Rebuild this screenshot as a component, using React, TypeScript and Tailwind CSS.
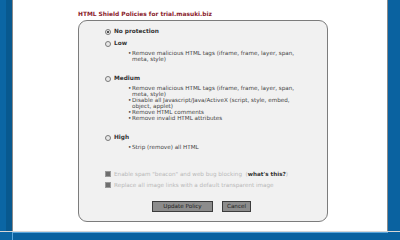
import React from 'react';

const font = { fontFamily: '"DejaVu Sans", Verdana, sans-serif' };

function Radio({ checked }: { checked?: boolean }) {
  return (
    <span className="relative inline-block w-[6px] h-[6px] rounded-full border border-[#7a7a7a] bg-[#e8e8e8] shrink-0">
      {checked ? <span className="absolute left-[1px] top-[1px] w-[2px] h-[2px] rounded-full bg-[#222]" /> : null}
    </span>
  );
}

function Option({ label, checked, items }: { label: string; checked?: boolean; items?: string[][] }) {
  return (
    <div>
      <div className="flex items-center gap-[3px] h-[7px]">
        <Radio checked={checked} />
        <span className="font-bold text-[#333] text-[5.8px] leading-[7px]">{label}</span>
      </div>
      {items ? (
        <ul className="mt-[3px] pl-[23px]">
          {items.map((lines, i) => (
            <li key={i} className="flex text-[#444] text-[5.65px] leading-[6px]">
              <span className="w-[4px] shrink-0">•</span>
              <span>
                {lines.map((l, j) => (
                  <div key={j}>{l}</div>
                ))}
              </span>
            </li>
          ))}
        </ul>
      ) : null}
    </div>
  );
}

export default function App() {
  return (
    <div className="w-[400px] h-[240px] flex flex-col overflow-hidden bg-[#0a62a0]" style={font}>
      <div className="flex flex-1 min-h-0">
        <div className="w-[12px] flex">
          <div className="w-[6px] bg-[#0b66a4]" />
          <div className="w-[6px] bg-[#08598f]" />
        </div>
        <div className="w-[376px] bg-white border-l border-r border-[#8a8a8a] pl-[65px] pt-[11px]">
          <div className="font-bold text-[#8a1c2c] text-[5.9px] leading-[7px]">
            HTML Shield Policies for trial.masuki.biz
          </div>
          <div className="mt-[2px] w-[250px] h-[202px] rounded-[9px] border border-[#7c7c7c] bg-[#f1f1f1] pl-[26px] pt-[7px]">
            <Option label="No protection" checked />
            <div className="mt-[5px]">
              <Option label="Low" items={[['Remove malicious HTML tags (iframe, frame, layer, span,', 'meta, style)']]} />
            </div>
            <div className="mt-[13px]">
              <Option
                label="Medium"
                items={[
                  ['Remove malicious HTML tags (iframe, frame, layer, span,', 'meta, style)'],
                  ['Disable  all Javascript/Java/ActiveX (script, style, embed,', 'object, applet)'],
                  ['Remove HTML comments'],
                  ['Remove invalid HTML attributes'],
                ]}
              />
            </div>
            <div className="mt-[13px]">
              <Option label="High" items={[['Strip (remove) all HTML']]} />
            </div>
            <div className="mt-[21px] flex flex-col gap-[5px] text-[5.65px] leading-[6px] text-[#b8b8b8]">
              <div className="flex items-center gap-[3px]">
                <span className="w-[6px] h-[6px] bg-[#6e6e6e] border border-[#9a9a9a] shrink-0" />
                <span>
                  Enable spam "beacon" and web bug blocking&nbsp; (<b className="text-[#333]">what's this?</b>)
                </span>
              </div>
              <div className="flex items-center gap-[3px]">
                <span className="w-[6px] h-[6px] bg-[#6e6e6e] border border-[#9a9a9a] shrink-0" />
                <span>Replace all image links with a default transparent image</span>
              </div>
            </div>
            <div className="mt-[13px] flex gap-[9px] pl-[47px]">
              <button className="w-[61px] h-[11px] bg-[#8c8c8c] border border-[#3c3c3c] text-[#1e1e1e] text-[5.65px] leading-[9px]">
                Update Policy
              </button>
              <button className="w-[29px] h-[11px] bg-[#8c8c8c] border border-[#3c3c3c] text-[#1e1e1e] text-[5.65px] leading-[9px]">
                Cancel
              </button>
            </div>
          </div>
        </div>
        <div className="w-[12px] bg-[#0a62a0]" />
      </div>
      <div className="h-[9px] flex border-t border-[#d6d6d6]">
        <div className="w-[12px] bg-[#0b66a4]" />
        <div className="w-[376px] bg-[#0a62a0] border-t border-l border-[#5aa6dc]" />
        <div className="w-[12px] bg-[#0a62a0]" />
      </div>
    </div>
  );
}
